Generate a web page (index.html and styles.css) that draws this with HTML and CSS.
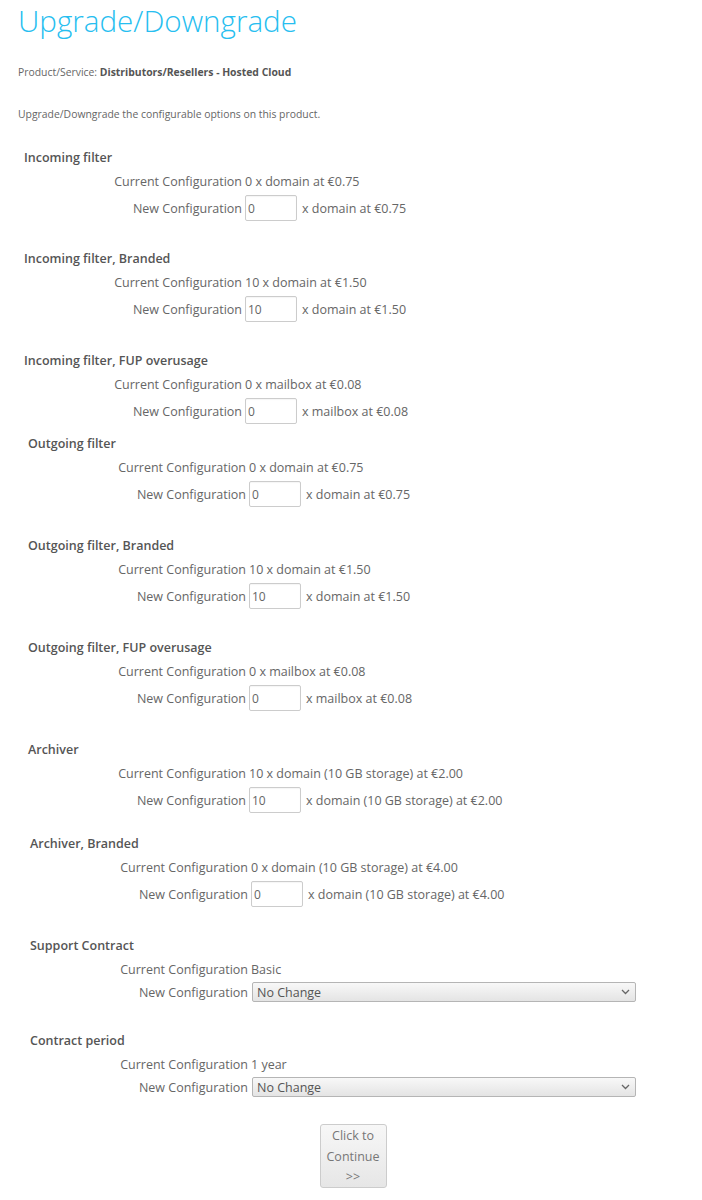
FILE: index.html
```html
<!DOCTYPE html>
<html lang="en">
<head>
<meta charset="utf-8">
<title>Upgrade/Downgrade</title>
<link rel="stylesheet" href="styles.css">
</head>
<body>
<div class="page">
  <h1 class="title">Upgrade/Downgrade</h1>
  <p class="meta">Product/Service: <strong>Distributors/Resellers - Hosted Cloud</strong></p>
  <p class="intro">Upgrade/Downgrade the configurable options on this product.</p>

  <div class="opt opt-a opt-first">
    <div class="opt-name">Incoming filter</div>
    <div class="grid">
      <span class="lbl">Current Configuration</span><span class="val">0 x domain at €0.75</span>
      <span class="lbl row-new">New Configuration</span><span class="val row-new"><input class="qty" type="text" value="0"><span class="unit">x domain at €0.75</span></span>
    </div>
  </div>

  <div class="opt opt-a">
    <div class="opt-name">Incoming filter, Branded</div>
    <div class="grid">
      <span class="lbl">Current Configuration</span><span class="val">10 x domain at €1.50</span>
      <span class="lbl row-new">New Configuration</span><span class="val row-new"><input class="qty" type="text" value="10"><span class="unit">x domain at €1.50</span></span>
    </div>
  </div>

  <div class="opt opt-a gap-s">
    <div class="opt-name">Incoming filter, FUP overusage</div>
    <div class="grid">
      <span class="lbl">Current Configuration</span><span class="val">0 x mailbox at €0.08</span>
      <span class="lbl row-new">New Configuration</span><span class="val row-new"><input class="qty" type="text" value="0"><span class="unit">x mailbox at €0.08</span></span>
    </div>
  </div>

  <div class="opt opt-b">
    <div class="opt-name">Outgoing filter</div>
    <div class="grid">
      <span class="lbl">Current Configuration</span><span class="val">0 x domain at €0.75</span>
      <span class="lbl row-new">New Configuration</span><span class="val row-new"><input class="qty" type="text" value="0"><span class="unit">x domain at €0.75</span></span>
    </div>
  </div>

  <div class="opt opt-b">
    <div class="opt-name">Outgoing filter, Branded</div>
    <div class="grid">
      <span class="lbl">Current Configuration</span><span class="val">10 x domain at €1.50</span>
      <span class="lbl row-new">New Configuration</span><span class="val row-new"><input class="qty" type="text" value="10"><span class="unit">x domain at €1.50</span></span>
    </div>
  </div>

  <div class="opt opt-b">
    <div class="opt-name">Outgoing filter, FUP overusage</div>
    <div class="grid">
      <span class="lbl">Current Configuration</span><span class="val">0 x mailbox at €0.08</span>
      <span class="lbl row-new">New Configuration</span><span class="val row-new"><input class="qty" type="text" value="0"><span class="unit">x mailbox at €0.08</span></span>
    </div>
  </div>

  <div class="opt opt-b gap-m">
    <div class="opt-name">Archiver</div>
    <div class="grid">
      <span class="lbl">Current Configuration</span><span class="val">10 x domain (10 GB storage) at €2.00</span>
      <span class="lbl row-new">New Configuration</span><span class="val row-new"><input class="qty" type="text" value="10"><span class="unit">x domain (10 GB storage) at €2.00</span></span>
    </div>
  </div>

  <div class="opt opt-c">
    <div class="opt-name">Archiver, Branded</div>
    <div class="grid">
      <span class="lbl">Current Configuration</span><span class="val">0 x domain (10 GB storage) at €4.00</span>
      <span class="lbl row-new">New Configuration</span><span class="val row-new"><input class="qty" type="text" value="0"><span class="unit">x domain (10 GB storage) at €4.00</span></span>
    </div>
  </div>

  <div class="opt opt-c opt-sel">
    <div class="opt-name">Support Contract</div>
    <div class="grid">
      <span class="lbl">Current Configuration</span><span class="val">Basic</span>
      <span class="lbl row-sel">New Configuration</span><span class="val row-sel"><span class="select-wrap"><select class="choice"><option>No Change</option></select><svg class="chev" width="9" height="6" viewBox="0 0 9 6"><path d="M1 1l3.5 3.5L8 1" fill="none" stroke="#666" stroke-width="1.3"/></svg></span></span>
    </div>
  </div>

  <div class="opt opt-c opt-sel opt-last">
    <div class="opt-name">Contract period</div>
    <div class="grid">
      <span class="lbl">Current Configuration</span><span class="val">1 year</span>
      <span class="lbl row-sel">New Configuration</span><span class="val row-sel"><span class="select-wrap"><select class="choice"><option>No Change</option></select><svg class="chev" width="9" height="6" viewBox="0 0 9 6"><path d="M1 1l3.5 3.5L8 1" fill="none" stroke="#666" stroke-width="1.3"/></svg></span></span>
    </div>
  </div>

  <div class="actions">
    <button class="btn" type="button">Click to Continue &gt;&gt;</button>
  </div>
</div>
</body>
</html>
```

FILE: styles.css
```css
html, body {
  margin: 0;
  padding: 0;
  background: #ffffff;
}

body {
  font-family: "Open Sans", "DejaVu Sans", sans-serif;
  color: #666666;
  font-size: 12.5px;
}

.page {
  padding: 0 0 0 18px;
  width: 684px;
}

.title {
  margin: 0;
  height: 42px;
  line-height: 42px;
  font-size: 29.6px;
  font-weight: 300;
  color: #27bef0;
}

.meta,
.intro {
  margin: 0;
  font-size: 10.4px;
  line-height: 16px;
  color: #666666;
}

.meta {
  margin-top: 22px;
}

.meta strong {
  font-weight: 700;
  color: #555555;
}

.intro {
  margin-top: 26px;
  margin-bottom: 23px;
}

.opt {
  margin-bottom: 24px;
}

.opt-a { margin-left: 6px; }
.opt-b { margin-left: 10px; }
.opt-c { margin-left: 12px; }

.opt-first { margin-bottom: 23px; }
.gap-s { margin-bottom: 5px; }
.gap-m { margin-bottom: 16px; }
.opt-sel { margin-bottom: 25px; }
.opt-last { margin-bottom: 26px; }

.opt-name {
  box-sizing: border-box;
  height: 24px;
  padding-top: 1px;
  line-height: 24px;
  font-weight: 600;
  color: #555555;
}

.grid {
  display: grid;
  grid-template-columns: 218px 1fr;
  grid-template-rows: 24px auto;
  column-gap: 3px;
  align-items: center;
}

.lbl {
  text-align: right;
  white-space: nowrap;
}

.val {
  white-space: nowrap;
  display: flex;
  align-items: center;
}

.row-new {
  height: 30px;
}

.grid > .row-new {
  align-self: stretch;
  display: flex;
  align-items: center;
}

.grid > .lbl.row-new {
  justify-content: flex-end;
}

.qty {
  box-sizing: border-box;
  width: 52px;
  height: 26px;
  margin: 0;
  padding: 0 2px;
  border: 1px solid #cccccc;
  border-radius: 2px;
  font-family: "Open Sans", "DejaVu Sans", sans-serif;
  font-size: 12px;
  color: #666666;
  background: #ffffff;
  box-shadow: inset 0 1px 1px rgba(0, 0, 0, 0.04);
  outline: none;
}

.unit {
  margin-left: 5px;
}

.row-sel {
  height: 22px;
}

.grid > .lbl.row-sel {
  display: flex;
  align-items: center;
  justify-content: flex-end;
  align-self: stretch;
}

.grid > .val.row-sel {
  align-self: stretch;
}

.select-wrap {
  position: relative;
  display: inline-block;
  margin-left: 1px;
}

.choice {
  -webkit-appearance: none;
  appearance: none;
  box-sizing: border-box;
  display: block;
  width: 384px;
  height: 20px;
  margin: 0;
  padding: 0 16px 0 4px;
  border: 1px solid #b5b5b5;
  border-radius: 2px;
  background: linear-gradient(#f8f8f8, #e4e4e4);
  font-family: "Open Sans", "DejaVu Sans", sans-serif;
  font-size: 12.5px;
  color: #555555;
  outline: none;
}

.chev {
  position: absolute;
  right: 6px;
  top: 7px;
  pointer-events: none;
}

.actions {
  display: flex;
  justify-content: center;
  padding-right: 12px;
}

.btn {
  box-sizing: border-box;
  width: 67px;
  height: 64px;
  margin: 0 0 0 -2px;
  padding: 1px 2px 0;
  border: 1px solid #cccccc;
  border-radius: 3px;
  background: linear-gradient(#f7f7f7, #e6e6e6);
  font-family: "Open Sans", "DejaVu Sans", sans-serif;
  font-size: 12.5px;
  line-height: 20.5px;
  color: #777777;
  text-align: center;
}
```
